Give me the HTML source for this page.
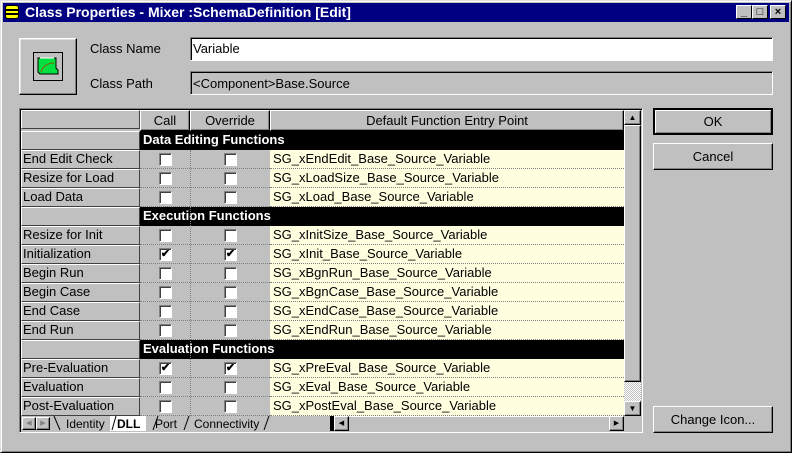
<!DOCTYPE html>
<html><head><meta charset="utf-8"><style>
*{box-sizing:border-box;margin:0;padding:0}
body{width:792px;height:453px;background:#c0c0c0;font-family:"Liberation Sans",sans-serif;font-size:12px;color:#000;position:relative;overflow:hidden}
.a{position:absolute}
.win{left:0;top:0;width:792px;height:453px;border:1px solid;border-color:#dfdfdf #000 #000 #dfdfdf;box-shadow:inset 1px 1px #fff,inset -1px -1px #808080}
.title{left:3px;top:3px;width:786px;height:19px;background:#000080;color:#fff;font-weight:bold;font-size:14px;line-height:19px;padding-left:22px}
.tb{top:5px;width:16px;height:14px;background:#c0c0c0;border:1px solid;border-color:#fff #000 #000 #fff;font-size:11px;line-height:12px;text-align:center;font-weight:bold;color:#000}
.sunk{border:1px solid;border-color:#808080 #fff #fff #808080;box-shadow:inset 1px 1px #000}
.lbl{font-size:13px}
.rl{position:absolute;left:21px;width:119px;height:19px;background:#c0c0c0;border:1px solid;border-color:#fff #404040 #404040 #fff;font-size:13px;line-height:16px;padding-left:1px}
.sec{position:absolute;left:140px;width:484px;height:19px;background:#000;color:#fff;font-weight:bold;font-size:13px;line-height:18px;padding-left:3px}
.fn{position:absolute;left:270px;width:354px;height:19px;background:#ffffe0;font-size:13px;line-height:18px;padding-left:3px;border-bottom:1px dotted #808080}
.cb{position:absolute;width:13px;height:13px;background:#fff;border:1px solid;border-color:#808080 #fff #fff #808080;box-shadow:inset 1px 1px #404040;font-size:11px;line-height:11px;text-align:center;font-weight:bold}
.gr{position:absolute;left:140px;width:130px;height:19px;background:#c0c0c0;border-bottom:1px dotted #808080}
.btn{position:absolute;background:#c0c0c0;border:1px solid;border-color:#fff #000 #000 #fff;box-shadow:inset -1px -1px #808080;text-align:center;font-size:13px}
.tab{position:absolute;top:417px;font-size:12px}
</style></head><body>
<div class="a win"></div>
<div class="a title">Class Properties - Mixer :SchemaDefinition [Edit]</div>
<div class="a" style="left:5px;top:5px;width:14px;height:14px;background:#ffff00;border-radius:3px;border:1px solid #000"><div style="margin-top:3px;height:2px;background:#000"></div><div style="margin-top:2px;height:2px;background:#000"></div></div>
<div class="a tb" style="left:736px">_</div>
<div class="a tb" style="left:752px">□</div>
<div class="a tb" style="left:770px">×</div>

<div class="a" style="left:19px;top:38px;width:58px;height:57px;border:1px solid;border-color:#fff #000 #000 #fff;box-shadow:inset -1px -1px #808080,inset 1px 1px #dfdfdf"></div>
<div class="a" style="left:33px;top:52px;width:30px;height:29px;border:1px solid #000;background:#c0c0c0"></div>
<svg class="a" style="left:37px;top:57px" width="22" height="20"><path d="M1 1 H19 V11 L21 13 V17 H3 L1 15 Z" fill="#00e040" stroke="#000"/><path d="M4 15 Q7 6 17 6" fill="none" stroke="#806000"/><path d="M3 1 H17" stroke="#fff"/></svg>

<div class="a lbl" style="left:90px;top:41px">Class Name</div>
<div class="a lbl" style="left:90px;top:76px">Class Path</div>
<div class="a sunk lbl" style="left:190px;top:37px;width:583px;height:24px;background:#fff;padding:3px 2px">Variable</div>
<div class="a sunk lbl" style="left:190px;top:71px;width:583px;height:24px;background:#c0c0c0;padding:4px 2px">&lt;Component&gt;Base.Source</div>

<div class="a sunk" style="left:19px;top:108px;width:624px;height:325px"></div>
<div class="rl" style="top:110px"></div>
<div class="btn" style="left:140px;top:110px;width:50px;height:21px;line-height:19px">Call</div>
<div class="btn" style="left:190px;top:110px;width:80px;height:21px;line-height:19px">Override</div>
<div class="btn" style="left:270px;top:110px;width:354px;height:21px;line-height:19px">Default Function Entry Point</div>

<div class="rl" style="top:131px"></div><div class="sec" style="top:131px">Data Editing Functions</div>
<div class="rl" style="top:150px">End Edit Check</div><div class="gr" style="top:150px"></div><div class="cb" style="left:159px;top:153px"></div><div class="cb" style="left:224px;top:153px"></div><div class="fn" style="top:150px">SG_xEndEdit_Base_Source_Variable</div>
<div class="rl" style="top:169px">Resize for Load</div><div class="gr" style="top:169px"></div><div class="cb" style="left:159px;top:172px"></div><div class="cb" style="left:224px;top:172px"></div><div class="fn" style="top:169px">SG_xLoadSize_Base_Source_Variable</div>
<div class="rl" style="top:188px">Load Data</div><div class="gr" style="top:188px"></div><div class="cb" style="left:159px;top:191px"></div><div class="cb" style="left:224px;top:191px"></div><div class="fn" style="top:188px">SG_xLoad_Base_Source_Variable</div>
<div class="rl" style="top:207px"></div><div class="sec" style="top:207px">Execution Functions</div>
<div class="rl" style="top:226px">Resize for Init</div><div class="gr" style="top:226px"></div><div class="cb" style="left:159px;top:229px"></div><div class="cb" style="left:224px;top:229px"></div><div class="fn" style="top:226px">SG_xInitSize_Base_Source_Variable</div>
<div class="rl" style="top:245px">Initialization</div><div class="gr" style="top:245px"></div><div class="cb" style="left:159px;top:248px">✔</div><div class="cb" style="left:224px;top:248px">✔</div><div class="fn" style="top:245px">SG_xInit_Base_Source_Variable</div>
<div class="rl" style="top:264px">Begin Run</div><div class="gr" style="top:264px"></div><div class="cb" style="left:159px;top:267px"></div><div class="cb" style="left:224px;top:267px"></div><div class="fn" style="top:264px">SG_xBgnRun_Base_Source_Variable</div>
<div class="rl" style="top:283px">Begin Case</div><div class="gr" style="top:283px"></div><div class="cb" style="left:159px;top:286px"></div><div class="cb" style="left:224px;top:286px"></div><div class="fn" style="top:283px">SG_xBgnCase_Base_Source_Variable</div>
<div class="rl" style="top:302px">End Case</div><div class="gr" style="top:302px"></div><div class="cb" style="left:159px;top:305px"></div><div class="cb" style="left:224px;top:305px"></div><div class="fn" style="top:302px">SG_xEndCase_Base_Source_Variable</div>
<div class="rl" style="top:321px">End Run</div><div class="gr" style="top:321px"></div><div class="cb" style="left:159px;top:324px"></div><div class="cb" style="left:224px;top:324px"></div><div class="fn" style="top:321px">SG_xEndRun_Base_Source_Variable</div>
<div class="rl" style="top:340px"></div><div class="sec" style="top:340px">Evaluation Functions</div>
<div class="rl" style="top:359px">Pre-Evaluation</div><div class="gr" style="top:359px"></div><div class="cb" style="left:159px;top:362px">✔</div><div class="cb" style="left:224px;top:362px">✔</div><div class="fn" style="top:359px">SG_xPreEval_Base_Source_Variable</div>
<div class="rl" style="top:378px">Evaluation</div><div class="gr" style="top:378px"></div><div class="cb" style="left:159px;top:381px"></div><div class="cb" style="left:224px;top:381px"></div><div class="fn" style="top:378px">SG_xEval_Base_Source_Variable</div>
<div class="rl" style="top:397px">Post-Evaluation</div><div class="gr" style="top:397px"></div><div class="cb" style="left:159px;top:400px"></div><div class="cb" style="left:224px;top:400px"></div><div class="fn" style="top:397px">SG_xPostEval_Base_Source_Variable</div>
<div class="a" style="left:190px;top:150px;width:0;height:266px;border-left:1px dotted #808080"></div>

<div class="a" style="left:624px;top:110px;width:17px;height:306px;background:repeating-conic-gradient(#fff 0 25%,#c0c0c0 0 50%) 0 0/2px 2px"></div>
<div class="btn" style="left:624px;top:110px;width:17px;height:15px;font-size:8px;line-height:13px">▲</div>
<div class="btn" style="left:624px;top:125px;width:17px;height:257px"></div>
<div class="btn" style="left:624px;top:401px;width:17px;height:15px;font-size:8px;line-height:13px">▼</div>
<div class="a" style="left:21px;top:416px;width:603px;height:15px;background:#c0c0c0"></div>
<div class="btn" style="left:22px;top:417px;width:14px;height:13px;font-size:7px;line-height:11px;color:#808080">◀</div>
<div class="btn" style="left:36px;top:417px;width:14px;height:13px;font-size:7px;line-height:11px;color:#808080">▶</div>
<div class="a" style="left:110px;top:416px;width:36px;height:15px;background:#fff"></div>
<div class="tab" style="left:66px">Identity</div>
<div class="tab" style="left:117px;font-weight:bold">DLL</div>
<div class="tab" style="left:155px">Port</div>
<div class="tab" style="left:194px">Connectivity</div>
<svg class="a" style="left:50px;top:416px" width="290" height="15"><g stroke="#000" fill="none"><path d="M4 0 L10 14"/><path d="M62 14 L66 0"/><path d="M103 14 L108 0"/><path d="M134 14 L139 0"/><path d="M214 14 L219 0"/></g><rect x="280" y="0" width="4" height="15" fill="#000"/></svg>
<div class="a" style="left:334px;top:416px;width:290px;height:15px;background:#c0c0c0;border-top:1px solid #fff"></div>
<div class="btn" style="left:334px;top:416px;width:15px;height:15px;font-size:7px;line-height:13px">◀</div>
<div class="btn" style="left:609px;top:416px;width:15px;height:15px;font-size:7px;line-height:13px">▶</div>

<div class="btn" style="left:653px;top:108px;width:120px;height:27px;line-height:24px;border:2px solid #000;box-shadow:inset 1px 1px #fff,inset -1px -1px #808080">OK</div>
<div class="btn" style="left:653px;top:143px;width:120px;height:27px;line-height:25px">Cancel</div>
<div class="btn" style="left:653px;top:406px;width:120px;height:27px;line-height:25px">Change Icon...</div>
</body></html>
